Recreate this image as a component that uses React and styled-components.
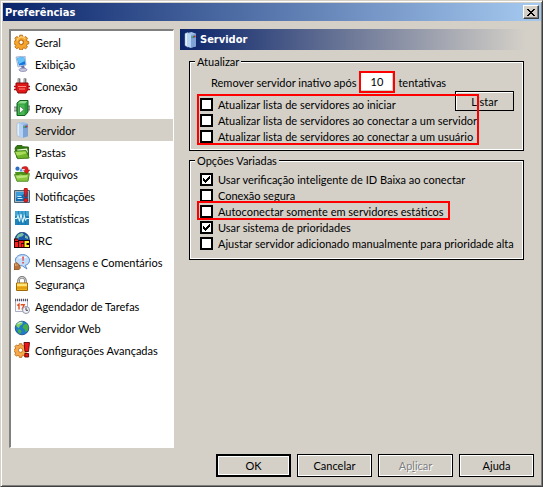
import React, { useState } from 'react';
import styled, { createGlobalStyle, css } from 'styled-components';

const GlobalStyle = createGlobalStyle`
  body {
    margin: 0;
    background: #d4d0c8;
  }
  *, *::before, *::after {
    box-sizing: border-box;
  }
  body, button, input {
    font-family: Lato, Tahoma, sans-serif;
    font-size: 11px;
    line-height: 13px;
    color: #000;
  }
  h1, h2 {
    margin: 0;
    font-family: "DejaVu Sans Condensed", "DejaVu Sans", Tahoma, sans-serif;
    font-size: 11px;
    font-weight: bold;
    color: #fff;
  }
`;

const gear = 'M6.5 0.8h3l.5 2 1.4.6 1.8-1 2 2-1.1 1.8.5 1.3 2 .5v2.6l-2 .5-.6 1.3 1.1 1.8-2 1.9-1.8-1-1.4.5-.5 2h-2.8l-.5-2-1.3-.6-1.8 1.1-2-2 1.1-1.8-.6-1.3-2-.5V7.9l2-.5.6-1.3L1 4.3l2-2 1.8 1.1 1.3-.6z';

const GearIcon = () => (
  <svg width="16" height="16" viewBox="0 0 18 17">
    <path d={gear} fill="#f5a52c" stroke="#b8660c" strokeWidth="1" />
    <path d="M3.5 7a5 5 0 0 1 9-2" fill="none" stroke="#ffd27a" strokeWidth="1.4" />
    <circle cx="8" cy="8.8" r="2.5" fill="#fff" stroke="#b8660c" strokeWidth="1.2" />
  </svg>
);

const MonitorIcon = () => (
  <svg width="16" height="16" viewBox="0 0 16 16">
    <path d="M2 1l9-1 1 9-8 2z" fill="#d5e4f4" stroke="#8a9cc0" strokeWidth=".7" />
    <path d="M3 2l7-1 1.500 7.500L5 9.500z" fill="#1477e0" />
    <path d="M3 2l7-1 .8 4L5 8z" fill="#67c4fa" />
    <path d="M7 10l3-.5 1 3-3 1z" fill="#6d70a8" />
    <ellipse cx="9" cy="13.800" rx="4" ry="1.700" fill="#c5c5de" stroke="#8080aa" strokeWidth=".7" />
  </svg>
);

const PlugIcon = () => (
  <svg width="16" height="16" viewBox="0 0 16 16">
    <path d="M5 6V.5M11 6V.5" stroke="#444" strokeWidth="2.6" />
    <path d="M4.8 6V1M10.8 6V1" stroke="#d0d0d0" strokeWidth="1.1" />
    <path d="M2 5h12v6l-2 4H4l-2-4z" fill="#e01818" stroke="#8c0808" />
    <path d="M0 8.5h2M0 11.5h2M14 8.5h2M14 11.5h2" stroke="#b00c0c" strokeWidth="1.3" />
    <path d="M4 8.5h8M5 11h6" stroke="#ff8a80" strokeWidth="1" />
  </svg>
);

const ProxyIcon = () => (
  <svg width="16" height="16" viewBox="0 0 16 16">
    <path d="M0 7h3v4H0M13 6h3v4h-3" fill="#bbb" stroke="#666" strokeWidth=".8" />
    <path d="M3 3l3-2.5h8V12l-3 3.5H3z" fill="#2c9c3c" stroke="#12641f" />
    <path d="M3.5 3.5l3-2.5h7l-2.5 2.5z" fill="#8fdc8f" />
    <path d="M4 4.5h6.5V15H4z" fill="#49b654" />
    <path d="M5.5 6l4.5 3.5-4.5 4z" fill="#fff" stroke="#12641f" strokeWidth=".6" />
  </svg>
);

const ServerIcon = () => (
  <svg width="16" height="16" viewBox="0 0 16 16">
    <path d="M3 1.5L6 .5v14.7L3 13.5z" fill="#e2effc" stroke="#8fa8c8" strokeWidth=".5" />
    <path d="M5.5 1l4-1L14 1.8v12.4l-5 1.6-3.5-1z" fill="#9fc0ea" />
    <path d="M9 3l5-1.2v12.4l-5 1.6z" fill="#7fa3d4" />
    <path d="M5.5 1L9 3v12.8l-3.5-1z" fill="#b4d2f4" />
    <path d="M9.5 4.2l4-.8v2l-4 .8z" fill="#4c6a96" />
    <path d="M9.7 4H11v1.5H9.7z" fill="#2fd23a" />
    <path d="M11.8 3.7h1.5v1.4h-1.5z" fill="#f02020" />
  </svg>
);

const FolderIcon = () => (
  <svg width="16" height="16" viewBox="0 0 16 16">
    <path d="M1 4l2-2.5h5l1 1.2 5.5.3V14H3z" fill="#34790f" stroke="#205407" strokeWidth=".8" />
    <path d="M3 5.5l10-1 1 4H4z" fill="#e9f6d4" />
    <path d="M.4 7.2l11.6-.7 3.2 7.4-11.5.8z" fill="#72b52c" stroke="#34790f" strokeWidth=".8" />
    <path d="M1.5 8l10-.6 1 2c-3 .5-6 2-9.5 2z" fill="#a9dc5a" />
  </svg>
);

const FilesIcon = () => (
  <svg width="16" height="16" viewBox="0 0 16 16">
    <path d="M1 6h13.5v8.5H3z" fill="#4c9418" />
    <circle cx="3.5" cy="2.7" r="2.1" fill="#2d6fc0" />
    <path d="M5.5 5.5L7 2l2 3.5z" fill="#4c9adf" />
    <path d="M8 1.5C12-.8 14.6 1 14 4h1.8L12.6 8 9.5 4.6h1.8c.1-1.6-1-2.3-3.3-1.7z" fill="#e02020" stroke="#991010" strokeWidth=".5" />
    <path d="M.4 8.5l4 .3 1.5-1 4.5.8 5-1-1.5 7.7H3z" fill="#8ac73e" stroke="#417f14" strokeWidth=".8" />
    <path d="M2 9.7l11.5-.4-.5 2-9.8 1.2z" fill="#bce57c" />
  </svg>
);

const NotifyIcon = () => (
  <svg width="16" height="16" viewBox="0 0 16 16">
    <path d="M.5 2.5h15v12H.5z" fill="#9eb4c4" stroke="#4b6474" />
    <path d="M2 4h12v9H2z" fill="#136cad" />
    <path d="M2 4h12l-12 6z" fill="#3a9bd8" />
    <path d="M3.5 8.5h4M3.5 10.5h5" stroke="#c7e7fa" />
    <path d="M10 1c0-1.2 3.6-1.2 3.6 0l-.9 8h-1.8z" fill="#e61c1c" stroke="#8e0b0b" strokeWidth=".6" />
    <circle cx="11.8" cy="12.3" r="2" fill="#e61c1c" stroke="#8e0b0b" strokeWidth=".6" />
  </svg>
);

const StatsIcon = () => (
  <svg width="16" height="16" viewBox="0 0 16 16">
    <path d="M1 1h14v14H1z" fill="#1f86bd" />
    <path d="M1 1h14v5H1z" fill="#43a7d6" />
    <path d="M4.5 1v14M8 1v14M11.5 1v14M1 8h14" stroke="#146a9c" strokeWidth=".6" />
    <path d="M0 8.5h3l1-3 1.5 6L7 4l1.7 8.5L10.3 6l1.2 4 1-1.5H16" fill="none" stroke="#d9f5ff" strokeWidth="1.1" />
  </svg>
);

const IrcIcon = () => (
  <svg width="16" height="16" viewBox="0 0 16 16">
    <circle cx="8.2" cy="7.5" r="7.2" fill="#1b57a8" stroke="#11366e" strokeWidth=".7" />
    <path d="M4 2.5l4-1.7 2 1.7-2 2-3 .5-1 2-2-.5zM11 3l3 2v2l-3-1z" fill="#7cc0a0" />
    <path d="M0 6.5h4V8h12v8H0z" fill="#200" />
    <path d="M1 10h3v5H1zM1 7.5h3V9H1zM5 9h2v6H5zM7 9h2.5v2H7z" fill="#ff2020" />
    <path d="M7.5 12h2v3h-2z" fill="#ff2020" />
    <path d="M10.5 9H15v2h-2.5v2H15v2h-4.5z" fill="#fff02c" />
  </svg>
);

const MessageIcon = () => (
  <svg width="16" height="16" viewBox="0 0 16 16">
    <path d="M8.5.6c4 0 7 2.4 7 5.6 0 2.6-1.6 4.5-4.3 5.2L13 15l-4.8-3.2C4 11.8 1.4 9.6 1.4 6.2 1.4 3 4.5.6 8.5.6z" fill="#c3dcf8" stroke="#4d83c8" strokeWidth=".9" />
    <path d="M4 4.5c1.5-2.5 6-3.3 9-.8-2 .8-6 .3-9 .8z" fill="#f3f9ff" />
    <path d="M8.2 2.5h1.7L9.5 7h-.9zM8.3 8h1.5v1.5H8.3z" fill="#e04040" />
    <path d="M0 10l2.5-1.5 3 2.5 1 3-2 2H0z" fill="#b5743c" stroke="#754318" strokeWidth=".6" />
    <path d="M1.5 9.5V12M3 10v2" stroke="#e7b27c" strokeWidth=".8" />
  </svg>
);

const LockIcon = () => (
  <svg width="16" height="16" viewBox="0 0 16 16">
    <path d="M4.5 8V4.8a3.5 3.5 0 0 1 7 0V8" fill="none" stroke="#777" strokeWidth="2.6" />
    <path d="M4.5 8V4.8a3.5 3.5 0 0 1 7 0V8" fill="none" stroke="#d5d5d5" strokeWidth="1" />
    <path d="M2.5 7h11v7.5h-11z" fill="#f0b41c" stroke="#a06a08" />
    <path d="M3 7.6h10V10H3z" fill="#ffe479" />
    <path d="M3 12h10" stroke="#d08f10" />
  </svg>
);

const CalendarIcon = () => (
  <svg width="16" height="16" viewBox="0 0 16 16">
    <path d="M1.5 2h12v11.5h-12z" fill="#f7f7fc" stroke="#9a9ab4" strokeWidth=".8" />
    <path d="M1 2h13" stroke="#555566" strokeWidth="2.4" strokeDasharray="1 1" />
    <path d="M3.2 7.5L5 6.2v5.3M6.7 6.7h3.5L8 11.5" fill="none" stroke="#e2501c" strokeWidth="1.4" />
    <circle cx="12" cy="12" r="3.5" fill="#eef1f8" stroke="#8a8aa0" strokeWidth=".9" />
    <path d="M12 9.5v2.8h2" fill="none" stroke="#333" strokeWidth=".9" />
  </svg>
);

const GlobeIcon = () => (
  <svg width="16" height="16" viewBox="0 0 16 16">
    <circle cx="8" cy="8" r="6.8" fill="#1e7cc8" stroke="#0f4684" strokeWidth=".8" />
    <path d="M2 5c1-2 3-3.5 5-3.5L9 3 7.500 5 6 5.500 5 8 3 7z" fill="#7fd05c" />
    <path d="M9.5 5l3-1.5 2 3-.5 4-2.5 1.5-1-3-2-1z" fill="#45b049" />
    <path d="M4 9l3 1 .5 2L6 14l-2-2z" fill="#45b049" />
    <path d="M3 4.5C5 2 8 1.5 9 2 6 3 5 4 3 4.5z" fill="#ceeffc" />
  </svg>
);

const AdvancedIcon = () => (
  <svg width="16" height="16" viewBox="0 0 16 16">
    <g transform="translate(0 1) scale(.82)">
      <path d={gear} fill="#f5a94a" stroke="#b96c18" />
      <circle cx="8" cy="8.8" r="2.6" fill="#fff" stroke="#b96c18" />
    </g>
    <path d="M10 .5h5.5l-1 9H11z" fill="#f01414" stroke="#5c0404" strokeWidth=".9" />
    <path d="M10.8 11.5h3.8V15h-3.8z" fill="#f01414" stroke="#5c0404" strokeWidth=".9" />
  </svg>
);

const pages = [
  { name: 'Geral', Icon: GearIcon },
  { name: 'Exibição', Icon: MonitorIcon },
  { name: 'Conexão', Icon: PlugIcon },
  { name: 'Proxy', Icon: ProxyIcon },
  { name: 'Servidor', Icon: ServerIcon },
  { name: 'Pastas', Icon: FolderIcon },
  { name: 'Arquivos', Icon: FilesIcon },
  { name: 'Notificações', Icon: NotifyIcon },
  { name: 'Estatísticas', Icon: StatsIcon },
  { name: 'IRC', Icon: IrcIcon },
  { name: 'Mensagens e Comentários', Icon: MessageIcon },
  { name: 'Segurança', Icon: LockIcon },
  { name: 'Agendador de Tarefas', Icon: CalendarIcon },
  { name: 'Servidor Web', Icon: GlobeIcon },
  { name: 'Configurações Avançadas', Icon: AdvancedIcon },
];

const Check = ({ label, defaultChecked }) => (
  <CheckLabel>
    <CheckBox>
      <input type="checkbox" defaultChecked={defaultChecked} />
      <svg width="7" height="7" viewBox="0 0 7 7" shapeRendering="crispEdges">
        <path d="M0 2h1v1h1v1h1v-1h1v-1h1v-1h1v-1h1v3h-1v1h-1v1h-1v1h-1v1h-1v-1h-1v-1h-1z" />
      </svg>
    </CheckBox>
    <span>{label}</span>
  </CheckLabel>
);

const App = () => {
  const [page, setPage] = useState('Servidor');
  const [attempts, setAttempts] = useState('10');

  return (
    <>
      <GlobalStyle />
      <Dialog>
        <TitleBar>
          <h1>Preferências</h1>
          <CloseButton type="button" aria-label="Fechar">
            <svg width="8" height="7" viewBox="0 0 8 7" shapeRendering="crispEdges">
              <path d="M0 0h2v1h1v1h2v-1h1v-1h2v1h-1v1h-1v1h-1v1h1v1h1v1h1v1h-2v-1h-1v-1h-2v1h-1v1h-2v-1h1v-1h1v-1h1v-1h-1v-1h-1v-1h-1z" />
            </svg>
          </CloseButton>
        </TitleBar>

        <Body>
          <PageList>
            {pages.map(({ name, Icon }) => (
              <li key={name}>
                <PageItem type="button" $active={name === page} onClick={() => setPage(name)}>
                  <Icon />
                  {name}
                </PageItem>
              </li>
            ))}
          </PageList>

          <Content>
            <PageHeader>
              <ServerIcon />
              <h2>Servidor</h2>
            </PageHeader>

            <Group>
              <legend>Atualizar</legend>
              <AttemptsRow>
                <label htmlFor="attempts">Remover servidor inativo após</label>
                <Highlight>
                  <AttemptsInput
                    id="attempts"
                    value={attempts}
                    onChange={(e) => setAttempts(e.target.value)}
                  />
                </Highlight>
                <span>tentativas</span>
              </AttemptsRow>
              <UpdateRow>
                <CheckHighlight $wide>
                  <Check label="Atualizar lista de servidores ao iniciar" />
                  <Check label="Atualizar lista de servidores ao conectar a um servidor" />
                  <Check label="Atualizar lista de servidores ao conectar a um usuário" />
                </CheckHighlight>
                <ListButton type="button">Listar</ListButton>
              </UpdateRow>
            </Group>

            <Group>
              <legend>Opções Variadas</legend>
              <Options>
                <Check label="Usar verificação inteligente de ID Baixa ao conectar" defaultChecked />
                <Check label="Conexão segura" />
                <CheckHighlight>
                  <Check label="Autoconectar somente em servidores estáticos" />
                </CheckHighlight>
                <Check label="Usar sistema de prioridades" defaultChecked />
                <Check label="Ajustar servidor adicionado manualmente para prioridade alta" />
              </Options>
            </Group>
          </Content>
        </Body>

        <Footer>
          <Button type="button" $primary>OK</Button>
          <Button type="button">Cancelar</Button>
          <Button type="button" disabled>Ap<u>l</u>icar</Button>
          <Button type="button">Ajuda</Button>
        </Footer>
      </Dialog>
    </>
  );
};

const Dialog = styled.main`
  display: flex;
  flex-direction: column;
  min-height: 100vh;
  padding: 2px 1px 9px 2px;
  background: #d4d0c8;
  border: 1px solid;
  border-color: #d4d0c8 #404040 #404040 #d4d0c8;
  box-shadow: inset 1px 1px 0 #fff, inset -1px -1px 0 #808080;
`;

const TitleBar = styled.header`
  display: flex;
  align-items: center;
  justify-content: space-between;
  height: 18px;
  padding: 0 2px;
  background: linear-gradient(to right, #0a246a, #a6caf0);
`;

const CloseButton = styled.button`
  display: flex;
  align-items: center;
  justify-content: center;
  width: 16px;
  height: 14px;
  padding: 0;
  background: #d4d0c8;
  border: 1px solid;
  border-color: #fff #404040 #404040 #fff;
  box-shadow: inset -1px -1px 0 #808080;
`;

const Body = styled.div`
  display: flex;
  flex: 1;
  gap: 6px;
  padding: 8px 8px 6px 6px;
`;

const PageList = styled.ul`
  flex: none;
  width: 165px;
  margin: 0;
  padding: 0;
  list-style: none;
  background: #fff;
  border: solid;
  border-width: 2px 1px 1px 2px;
  border-color: #808080 #fff #fff #808080;
`;

const PageItem = styled.button`
  display: flex;
  align-items: center;
  gap: 5px;
  width: 100%;
  height: 22px;
  padding: 0 3px;
  border: none;
  text-align: left;
  white-space: nowrap;
  background: ${({ $active }) => ($active ? '#d4d0c8' : 'transparent')};

  svg {
    flex: none;
  }
`;

const Content = styled.section`
  flex: 1;
  min-width: 0;
`;

const PageHeader = styled.div`
  display: flex;
  align-items: center;
  gap: 2px;
  height: 21px;
  margin-bottom: 5px;
  padding-left: 2px;
  background: linear-gradient(to right, #0a246a, #d4d0c8 98%);
`;

const Group = styled.fieldset`
  min-width: 0;
  margin: 0 9px 3px;
  padding: 0 9px 6px 7px;
  border: 1px solid #000;
  box-shadow: inset 1px 1px 0 #fff, inset -1px -1px 0 #fff;

  legend {
    margin-left: -2px;
    padding: 0 2px;
    line-height: 13px;
    background: #d4d0c8;
  }
`;

/* red frame drawn over the settings it surrounds */
const Highlight = styled.div`
  position: relative;
  flex: none;
  width: fit-content;

  &::after {
    content: "";
    position: absolute;
    inset: -2px;
    border: 2px solid #f00;
    pointer-events: none;
    z-index: 1;
  }
`;

const CheckHighlight = styled(Highlight)`
  padding-right: 4px;

  &::after {
    inset: -2px 0 -1px;
  }

  ${({ $wide }) => $wide && css`
    width: 282px;
  `}
`;

const AttemptsRow = styled.div`
  display: flex;
  align-items: center;
  gap: 5px;
  height: 22px;
  margin: 3px 0;
  padding-left: 14px;
`;

const AttemptsInput = styled.input`
  display: block;
  width: 32px;
  height: 18px;
  padding: 0;
  border: 1px solid #d4d0c8;
  border-width: 0 1px 1px 0;
  background: #fff;
  text-align: center;
  outline: none;
`;

const UpdateRow = styled.div`
  display: flex;
  align-items: flex-start;
  justify-content: space-between;
`;

const CheckLabel = styled.label`
  display: flex;
  align-items: center;
  gap: 5px;
  height: 16px;
  padding: 0 2px 0 3px;
  white-space: nowrap;
`;

const CheckBox = styled.span`
  display: grid;
  place-items: center;

  input, svg {
    grid-area: 1 / 1;
  }

  input {
    appearance: none;
    width: 13px;
    height: 13px;
    margin: 0;
    background: #fff;
    border: 2px solid #000;
  }

  svg {
    visibility: hidden;
    pointer-events: none;
  }

  input:checked + svg {
    visibility: visible;
  }
`;

const Options = styled.div`
  padding: 4px 0 2px;
`;

const Button = styled.button`
  width: 75px;
  height: 23px;
  padding: 0;
  background: #d4d0c8;
  border: ${({ $primary }) => ($primary ? 2 : 1)}px solid #000;
  border-radius: 0;
  box-shadow: inset 0 0 0 1px #fff;

  &:disabled {
    color: #808080;
    text-shadow: 1px 1px 0 #fff;
  }
`;

const ListButton = styled(Button)`
  flex: none;
  width: 59px;
  height: 20px;
  margin: -5px 0 0 -24px;
  box-shadow: inset 1px 1px 0 #fff;
`;

const Footer = styled.footer`
  display: flex;
  justify-content: flex-end;
  gap: 6px;
  padding-right: 7px;
`;

export default App;
